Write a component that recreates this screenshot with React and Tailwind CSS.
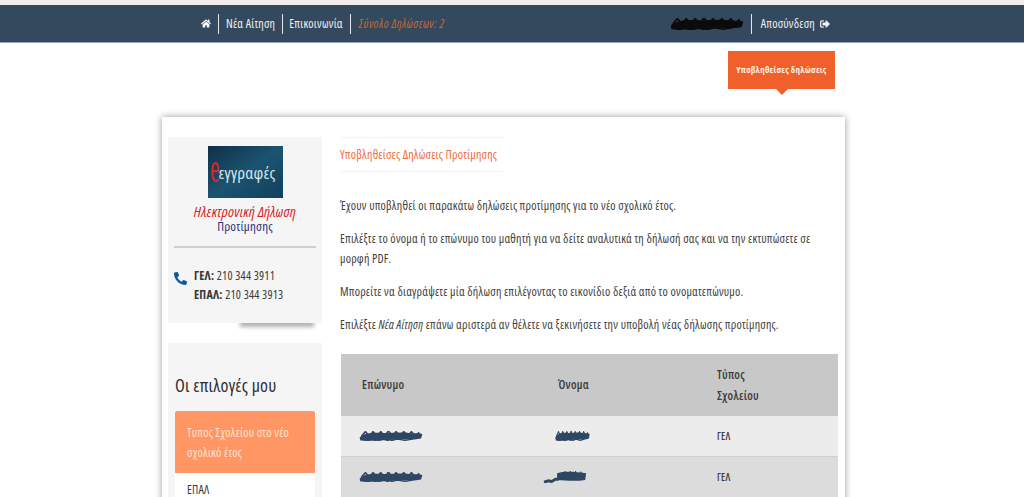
import React from 'react';
import { FaHome, FaPhone, FaSignOutAlt } from 'react-icons/fa';

// the redacted names in the reference are hand scribbles
const Scribble = ({ width, height = 12, color = '#2f4763', tail = false }) => (
  <svg width={width} height={height} viewBox="0 0 100 16" preserveAspectRatio="none" className="block">
    {tail ? (
      <>
        <path d="M2 15 L12 13 L20 14 L28 11 L36 11" stroke={color} strokeWidth="4" fill="none" />
        <path d="M32 3 C50 0 70 1 98 3 L96 12 C76 14 52 13 32 12 Z" fill={color} />
        <path d="M38 3 L44 10 L50 1 L56 10 L62 1 L68 10 L74 1 L80 10 L86 2 L92 10" stroke={color} strokeWidth="2.5" fill="none" />
      </>
    ) : (
      <>
        <path d="M1 10 C8 3 22 2 36 3 S64 1 78 3 S94 2 99 5 L97 12 C84 15 70 13 56 14 S22 16 2 15 Z" fill={color} />
        <path d="M4 8 L10 1 L16 8 L22 1 L28 8 L34 1 L40 8 L46 0 L52 8 L58 1 L64 8 L70 1 L76 8 L82 1 L88 8 L94 2" stroke={color} strokeWidth="2.5" fill="none" />
        <path d="M6 13 L12 16 L20 13 L28 16 L38 13 L48 16 L60 13 L72 15 L84 13" stroke={color} strokeWidth="2" fill="none" />
      </>
    )}
  </svg>
);

const paragraphs = [
  <>Έχουν υποβληθεί οι παρακάτω δηλώσεις προτίμησης για το νέο σχολικό έτος.</>,
  <>Επιλέξτε το όνομα ή το επώνυμο του μαθητή για να δείτε αναλυτικά τη δήλωσή σας και να την εκτυπώσετε σε μορφή PDF.</>,
  <>Μπορείτε να διαγράψετε μία δήλωση επιλέγοντας το εικονίδιο δεξιά από το ονοματεπώνυμο.</>,
  <>Επιλέξτε <em>Νέα Αίτηση</em> επάνω αριστερά αν θέλετε να ξεκινήσετε την υποβολή νέας δήλωσης προτίμησης.</>,
];

const NavBar = () => (
  <div className="h-[38px] bg-[#34495e] border-b border-[#8fa6bb] flex items-center justify-between pl-[201px] pr-[194px] text-[12px] text-[#eef2f5]">
    <div className="flex items-center">
      <FaHome className="text-[11px] text-white w-[10px]" />
      <span className="w-px h-[20px] bg-[#dfe6ec] ml-[7px] mr-[7px]" />
      <span>Νέα Αίτηση</span>
      <span className="w-px h-[20px] bg-[#dfe6ec] ml-[7px] mr-[6px]" />
      <span>Επικοινωνία</span>
      <span className="w-px h-[20px] bg-[#dfe6ec] ml-[7px] mr-[8px]" />
      <span className="italic text-[#c8682c] tracking-[0.5px]">Σύνολο Δηλώσεων: 2</span>
    </div>
    <div className="flex items-center">
      <Scribble width={74} height={12} color="#0b0b0b" />
      <span className="w-px h-[20px] bg-[#dfe6ec] ml-[7px] mr-[9px]" />
      <span>Αποσύνδεση</span>
      <FaSignOutAlt className="text-[10px] ml-[5px] w-[10px]" />
    </div>
  </div>
);

const ContactBox = () => (
  <div className="h-[186px] bg-[#f5f5f5] px-[6px] pt-[9px] shadow-[32px_44px_4px_-40px_rgba(0,0,0,0.3)]">
    <div className="flex flex-col items-center">
      <div className="w-[75px] h-[52px] bg-linear-to-br from-[#0f3048] via-[#1b5470] to-[#123f5c] flex items-center pl-[2px] text-[#d9e6ee] text-[17px] leading-none">
        <span className="w-[9px] text-[#d8262a] text-[36px] leading-none scale-x-[0.65] origin-left -mt-[6px]">e</span>
        <span className="whitespace-nowrap">εγγραφές</span>
      </div>
      <div className="mt-[6px] text-[15px] leading-[15px] italic text-[#d8262a] whitespace-nowrap">Ηλεκτρονική Δήλωση</div>
      <div className="text-[13px] leading-[15px] text-[#27307c]">Προτίμησης</div>
    </div>
    <div className="h-[2px] bg-[#cfcfcf] mt-[12px]" />
    <div className="flex mt-[18px] text-[12px] leading-[19px] text-[#3a3a3a]">
      <FaPhone className="text-[#0b5a9e] mt-[4px] w-[13px] h-[17px] scale-x-[-1]" />
      <div className="ml-[7px]">
        <div><b>ΓΕΛ:</b> 210 344 3911</div>
        <div><b>ΕΠΑΛ:</b> 210 344 3913</div>
      </div>
    </div>
  </div>
);

const ChoicesBox = () => (
  <div className="mt-[20px] bg-[#f5f5f5] px-[7px] pt-[29px]">
    <h2 className="text-[18px] leading-[26px] font-medium text-[#2c2f33]">Οι επιλογές μου</h2>
    <div className="mt-[13px] bg-[#ff9664] rounded-t-[2px] h-[62px] px-[12px] pt-[12px] text-[12px] leading-[20px] text-[#ffe3d2]">
      Τυπος Σχολείου στο νέο σχολικό έτος
    </div>
    <div className="bg-white h-[50px] px-[12px] pt-[7px] text-[12px] leading-[20px] text-[#3a3a3a]">ΕΠΑΛ</div>
  </div>
);

const Row = ({ bg, nameW, offset, tail }) => (
  <div className={`grid grid-cols-[200px_176px_1fr] h-[41px] items-center border-b border-[#d0d0d0] ${bg}`}>
    <div className="pl-[18px]"><Scribble width={64} height={10} /></div>
    <div className={offset}><Scribble width={nameW} height={tail ? 12 : 10} tail={tail} /></div>
    <div className="text-[10px] font-semibold text-[#3c3c3c]">ΓΕΛ</div>
  </div>
);

const MainColumn = () => (
  <div className="w-[498px] ml-[18px]">
    <div className="w-[163px] h-[35px] border-y border-[#f3f3f3] flex items-center text-[12px] text-[#ee6a3c] whitespace-nowrap">
      Υποβληθείσες Δηλώσεις Προτίμησης
    </div>
    <div className="mt-[24px] flex flex-col gap-[13px] text-[12px] leading-[20px] text-[#3d3d3d] pr-[2px]">
      {paragraphs.map((p, i) => <p key={i}>{p}</p>)}
    </div>
    <div className="mt-[19px] ml-[1px]">
      <div className="grid grid-cols-[200px_176px_1fr] h-[62px] items-center bg-[#c8c8c8] text-[12px] font-semibold text-[#3a3a3a]">
        <div className="pl-[21px]">Επώνυμο</div>
        <div className="pl-[17px]">Όνομα</div>
        <div className="leading-[21px]">Τύπος<br />Σχολείου</div>
      </div>
      <Row bg="bg-[#ececec]" nameW={35} offset="pl-[14px]" />
      <Row bg="bg-[#dcdcdc]" nameW={44} offset="pl-[2px]" tail />
    </div>
  </div>
);

export default function App() {
  return (
    <div className="w-[1024px] h-[497px] overflow-hidden bg-white font-['Open_Sans','Noto_Sans',sans-serif] font-stretch-condensed tracking-[0.23px]">
      <div className="h-[5px] bg-[#f2efea]" />
      <NavBar />
      <div className="flex justify-end pr-[189px] mt-[8px]">
        <div className="relative w-[107px] h-[38px] bg-[#f0602a] flex items-center justify-center text-[9px] font-bold text-[#fff1e8] whitespace-nowrap">
          Υποβληθείσες δηλώσεις
          <span className="absolute left-1/2 -translate-x-1/2 top-full border-x-[6px] border-x-transparent border-t-[6px] border-t-[#f0602a]" />
        </div>
      </div>
      <div className="ml-[162px] w-[683px] mt-[28px] h-[400px] bg-white flex pl-[6px] pt-[20px] shadow-[0_0_7px_rgba(0,0,0,0.4)]">
        <div className="w-[154px] shrink-0">
          <ContactBox />
          <ChoicesBox />
        </div>
        <MainColumn />
      </div>
    </div>
  );
}
